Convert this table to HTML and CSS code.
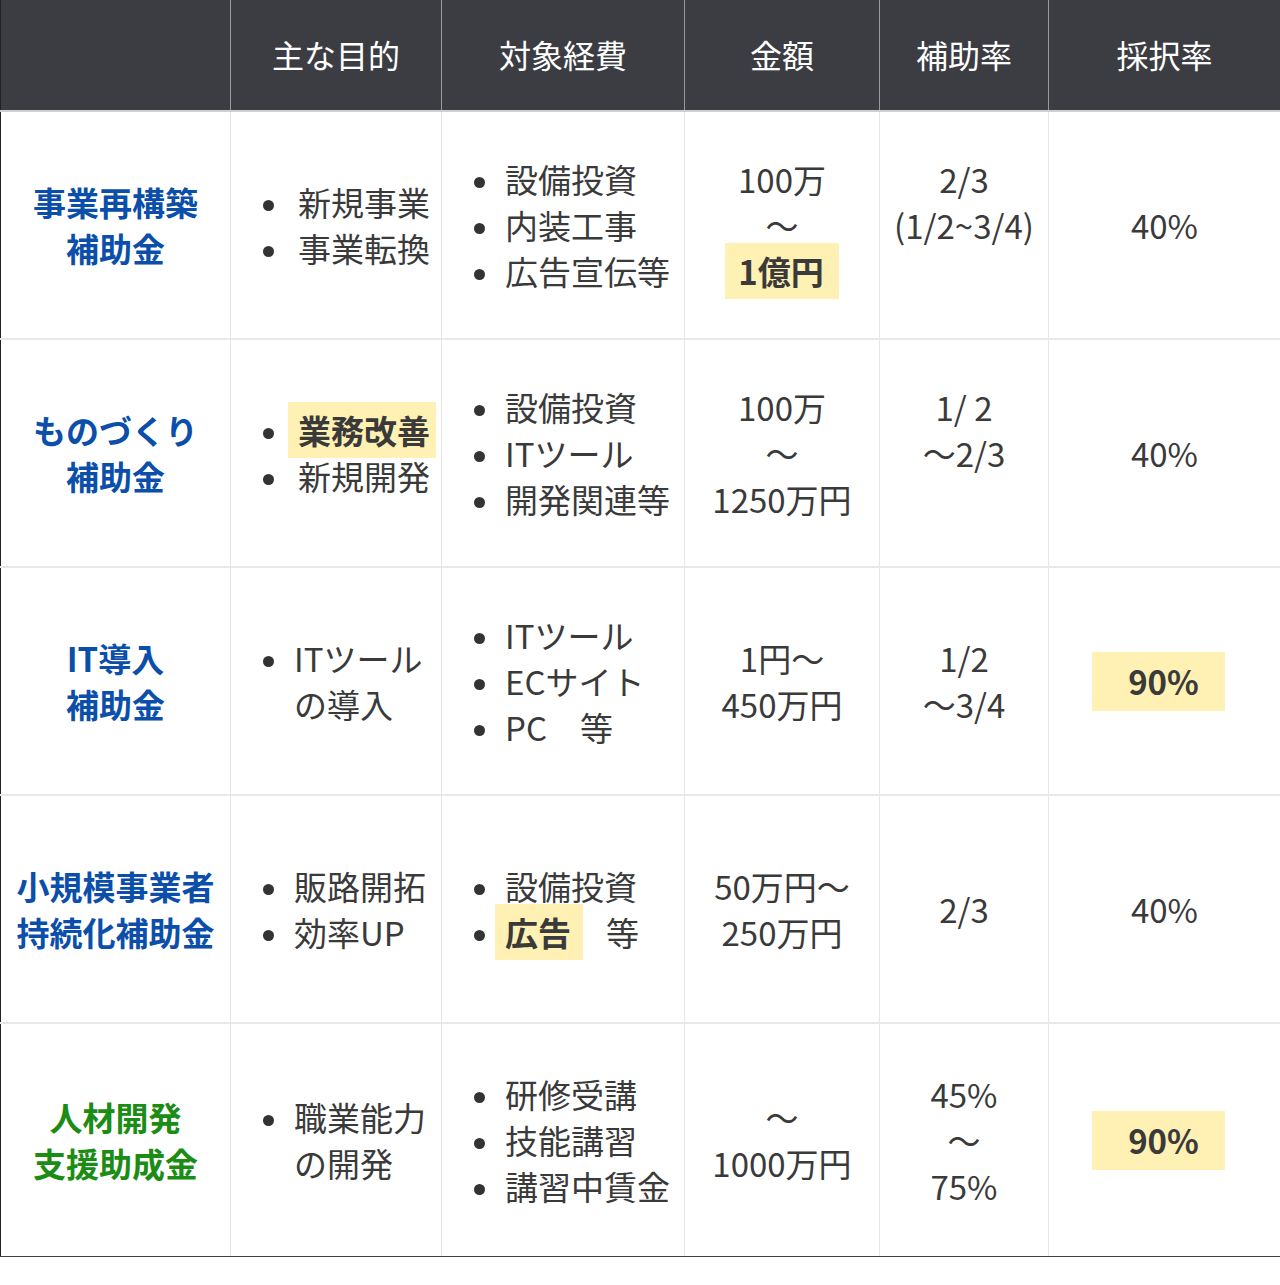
FILE: index.html
```html
<!DOCTYPE html>
<html lang="ja">
<head>
<meta charset="utf-8">
<title>補助金比較表</title>
<link rel="stylesheet" href="styles.css">
</head>
<body>
<table class="cmp">
  <colgroup>
    <col class="c1"><col class="c2"><col class="c3"><col class="c4"><col class="c5"><col class="c6">
  </colgroup>
  <thead>
    <tr>
      <th></th>
      <th>主な目的</th>
      <th>対象経費</th>
      <th>金額</th>
      <th>補助率</th>
      <th>採択率</th>
    </tr>
  </thead>
  <tbody>
    <tr>
      <td class="name blue">事業再構築<br>補助金</td>
      <td class="list list-wide"><ul><li>新規事業</li><li>事業転換</li></ul></td>
      <td class="list"><ul><li>設備投資</li><li>内装工事</li><li>広告宣伝等</li></ul></td>
      <td class="ctr">100万<br>～<br><span class="hl hl-amt">1億円</span></td>
      <td class="ctr">2/3<br>(1/2~3/4)<br>&nbsp;</td>
      <td class="ctr">40%</td>
    </tr>
    <tr>
      <td class="name blue">ものづくり<br>補助金</td>
      <td class="list list-wide"><ul><li><span class="hl hl-in">業務改善</span></li><li>新規開発</li></ul></td>
      <td class="list"><ul><li>設備投資</li><li>ITツール</li><li>開発関連等</li></ul></td>
      <td class="ctr">100万<br>～<br>1250万円</td>
      <td class="ctr">1/ 2<br>～2/3<br>&nbsp;</td>
      <td class="ctr">40%</td>
    </tr>
    <tr>
      <td class="name blue">IT導入<br>補助金</td>
      <td class="list"><ul><li>ITツール<br>の導入</li></ul></td>
      <td class="list"><ul><li>ITツール</li><li>ECサイト</li><li>PC　等</li></ul></td>
      <td class="ctr">1円～<br>450万円</td>
      <td class="ctr">1/2<br>～3/4</td>
      <td class="ctr"><span class="hl hl-rate">90%</span></td>
    </tr>
    <tr>
      <td class="name blue">小規模事業者<br>持続化補助金</td>
      <td class="list"><ul><li>販路開拓</li><li>効率UP</li></ul></td>
      <td class="list"><ul><li>設備投資</li><li><span class="hl hl-in">広告</span>　等</li></ul></td>
      <td class="ctr">50万円～<br>250万円</td>
      <td class="ctr">2/3</td>
      <td class="ctr">40%</td>
    </tr>
    <tr class="last">
      <td class="name green">人材開発<br>支援助成金</td>
      <td class="list"><ul><li>職業能力<br>の開発</li></ul></td>
      <td class="list"><ul><li>研修受講</li><li>技能講習</li><li>講習中賃金</li></ul></td>
      <td class="ctr">～<br>1000万円</td>
      <td class="ctr">45%<br>～<br>75%</td>
      <td class="ctr"><span class="hl hl-rate">90%</span></td>
    </tr>
  </tbody>
</table>
</body>
</html>
```

FILE: styles.css
```css
html, body {
  margin: 0;
  padding: 0;
  background: #ffffff;
}

body {
  font-family: "Noto Sans CJK JP", "Noto Sans", sans-serif;
  color: #3a3a3a;
  font-size: 33px;
  line-height: 46px;
}

.cmp {
  width: 1280px;
  border-collapse: collapse;
  table-layout: fixed;
  border-left: 1px solid #222;
  border-right: 1px solid #222;
  border-bottom: 1px solid #444;
}

.c1 { width: 230px; }
.c2 { width: 211px; }
.c3 { width: 243px; }
.c4 { width: 195px; }
.c5 { width: 169px; }
.c6 { width: 232px; }

.cmp th {
  background: #3c3d42;
  color: #ffffff;
  font-size: 32px;
  font-weight: 400;
  height: 108px;
  padding: 0 0 2px;
  text-align: center;
  vertical-align: middle;
  border-left: 1px solid #9a9a9a;
  border-bottom: 2px solid #cfcfcf;
}

.cmp th:first-child {
  border-left: 1px solid #222;
}

.cmp td {
  height: 226px;
  padding: 0;
  vertical-align: middle;
  border-left: 1px solid #e6e6e6;
  border-bottom: 2px solid #e8e8e8;
}

.cmp td:first-child {
  border-left: 1px solid #222;
}

.cmp tr.last td {
  height: 232px;
  border-bottom: 1px solid #444;
}

.name {
  text-align: center;
  font-weight: 700;
}

.blue { color: #0b4fab; }
.green { color: #1b8c14; }

.ctr {
  text-align: center;
}

.list {
  padding-left: 32px !important;
}

.list ul {
  list-style: none;
  margin: 0;
  padding: 0;
}

.list li {
  padding-left: 31px;
  white-space: nowrap;
}

.list-wide li {
  padding-left: 35px;
}

.list li::before {
  content: "";
  display: inline-block;
  width: 11px;
  height: 11px;
  border-radius: 50%;
  background: #333333;
  margin-left: -31px;
  margin-right: 20px;
  vertical-align: middle;
  position: relative;
  top: -2px;
}

.list-wide li::before {
  margin-left: -35px;
  margin-right: 24px;
}

.hl {
  background: #fff0b3;
  font-weight: 700;
  padding: 4px 10px;
}

.hl-in {
  margin-left: -10px;
  margin-right: -10px;
  padding-right: 12px;
}

.list-wide .hl-in {
  padding-right: 6px;
  margin-right: -6px;
}

.hl-amt {
  padding: 4px 15px 4px 13px;
}

.hl-rate {
  padding: 5px 26px 6px 36px;
  margin-right: 12px;
}
```
